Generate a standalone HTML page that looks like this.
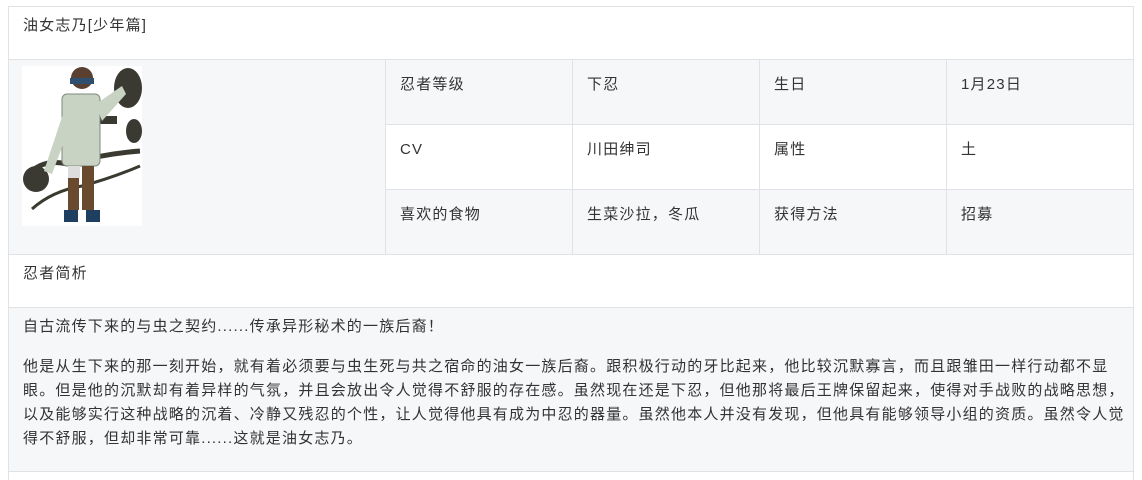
<!DOCTYPE html>
<html style="height:480px;overflow:hidden;"><head><meta charset="utf-8"><style>
body{margin:0;height:480px;background:#fff;font-family:"Liberation Sans","Noto Sans CJK SC",sans-serif;font-size:15px;letter-spacing:1.2px;color:#333;overflow:hidden;position:relative;}
.a{position:absolute;box-sizing:border-box;}
.t{position:absolute;line-height:24px;white-space:nowrap;}
</style></head><body>
<div class="a" style="left:8px;top:6px;width:1126px;height:474px;border:1px solid #e1e2e5;border-bottom:none;"></div>
<div class="a" style="left:9px;top:59px;width:1124px;height:195px;background:#f6f7f9;"></div>
<div class="a" style="left:386px;top:124px;width:747px;height:65px;background:#fff;"></div>
<div class="a" style="left:9px;top:307px;width:1124px;height:164px;background:#f6f7f9;"></div>
<div class="a" style="left:9px;top:59px;width:1124px;height:1px;background:#e1e2e5;"></div>
<div class="a" style="left:386px;top:124px;width:747px;height:1px;background:#e1e2e5;"></div>
<div class="a" style="left:386px;top:189px;width:747px;height:1px;background:#e1e2e5;"></div>
<div class="a" style="left:9px;top:254px;width:1124px;height:1px;background:#e1e2e5;"></div>
<div class="a" style="left:9px;top:307px;width:1124px;height:1px;background:#e1e2e5;"></div>
<div class="a" style="left:9px;top:471px;width:1124px;height:1px;background:#e1e2e5;"></div>
<div class="a" style="left:385px;top:60px;width:1px;height:194px;background:#e1e2e5;"></div>
<div class="a" style="left:572px;top:60px;width:1px;height:194px;background:#e1e2e5;"></div>
<div class="a" style="left:759px;top:60px;width:1px;height:194px;background:#e1e2e5;"></div>
<div class="a" style="left:946px;top:60px;width:1px;height:194px;background:#e1e2e5;"></div>

<div class="t" style="left:23px;top:14px;">油女志乃[少年篇]</div>
<svg class="a" style="left:22px;top:66px;" width="120" height="160" viewBox="0 0 120 160">
<rect width="120" height="160" fill="#fff"/>
<path d="M5 110 Q20 92 45 98 Q80 88 118 85" stroke="#3a3a30" stroke-width="5" fill="none"/>
<path d="M10 143 Q30 125 60 120 Q90 112 118 100" stroke="#3a3a30" stroke-width="3" fill="none"/>
<ellipse cx="14" cy="113" rx="13" ry="13" fill="#3b3a32"/>
<ellipse cx="106" cy="22" rx="14" ry="20" fill="#3b3a32"/>
<ellipse cx="112" cy="65" rx="8" ry="12" fill="#3b3a32"/>
<rect x="55" y="50" width="40" height="8" fill="#3b3a32"/>
<rect x="40" y="28" width="38" height="72" rx="5" fill="#c9d3c4" stroke="#7f8a7d"/>
<path d="M42 45 L22 105 L30 108 L46 65Z" fill="#c9d3c4"/>
<path d="M74 38 L100 20 L104 28 L80 55Z" fill="#c9d3c4"/>
<circle cx="60" cy="12" r="11" fill="#5a4030"/>
<rect x="48" y="12" width="24" height="6" fill="#2f4f70"/>
<rect x="46" y="100" width="12" height="12" fill="#ddd"/>
<rect x="46" y="112" width="11" height="32" fill="#6a4a2e"/>
<rect x="60" y="100" width="12" height="44" fill="#6a4a2e"/>
<rect x="42" y="144" width="14" height="12" fill="#1f3f60"/>
<rect x="64" y="144" width="14" height="12" fill="#1f3f60"/>
</svg>

<div class="t" style="left:400px;top:73px;">忍者等级</div>
<div class="t" style="left:587px;top:73px;">下忍</div>
<div class="t" style="left:774px;top:73px;">生日</div>
<div class="t" style="left:961px;top:73px;">1月23日</div>
<div class="t" style="left:400px;top:138px;">CV</div>
<div class="t" style="left:587px;top:138px;">川田绅司</div>
<div class="t" style="left:774px;top:138px;">属性</div>
<div class="t" style="left:961px;top:138px;">土</div>
<div class="t" style="left:400px;top:203px;">喜欢的食物</div>
<div class="t" style="left:587px;top:203px;">生菜沙拉，冬瓜</div>
<div class="t" style="left:774px;top:203px;">获得方法</div>
<div class="t" style="left:961px;top:203px;">招募</div>

<div class="t" style="left:23px;top:262px;">忍者简析</div>
<div class="t" style="left:23px;top:315px;">自古流传下来的与虫之契约......传承异形秘术的一族后裔！</div>
<div class="t" style="left:23px;top:355px;">他是从生下来的那一刻开始，就有着必须要与虫生死与共之宿命的油女一族后裔。跟积极行动的牙比起来，他比较沉默寡言，而且跟雏田一样行动都不显</div>
<div class="t" style="left:23px;top:379px;">眼。但是他的沉默却有着异样的气氛，并且会放出令人觉得不舒服的存在感。虽然现在还是下忍，但他那将最后王牌保留起来，使得对手战败的战略思想，</div>
<div class="t" style="left:23px;top:403px;">以及能够实行这种战略的沉着、冷静又残忍的个性，让人觉得他具有成为中忍的器量。虽然他本人并没有发现，但他具有能够领导小组的资质。虽然令人觉</div>
<div class="t" style="left:23px;top:427px;">得不舒服，但却非常可靠......这就是油女志乃。</div>
</body></html>
